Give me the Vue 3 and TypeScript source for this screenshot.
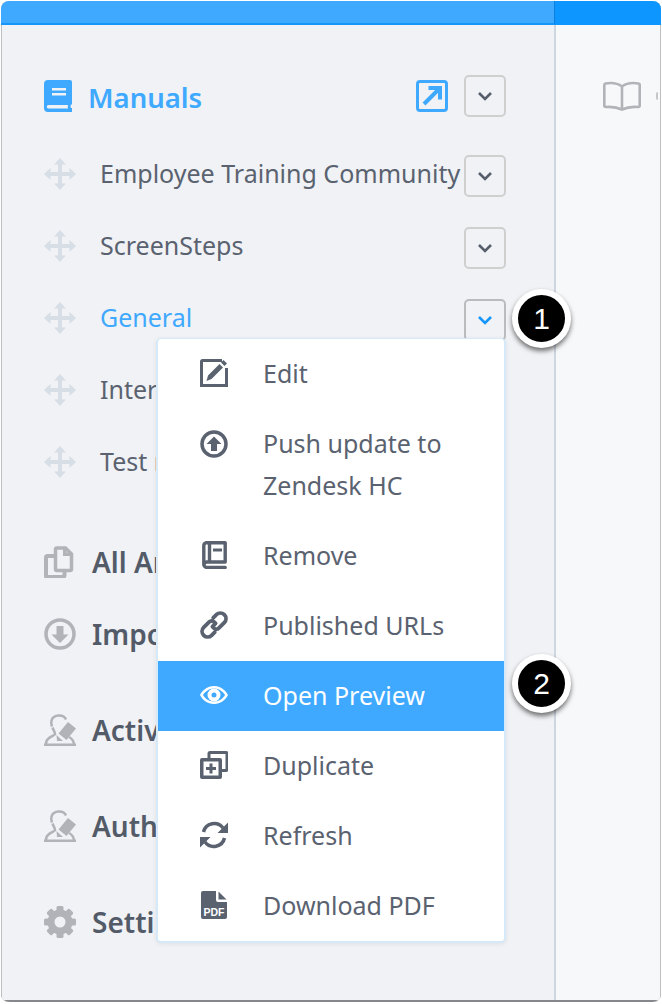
<script setup lang="ts">
const icons: Record<string, string> = {
  edit: '<path d="M22 1.500H2.500a1 1 0 0 0-1 1v24h25V9" fill="none" stroke="currentColor" stroke-width="3"/><path d="M6.500 22l1.500-5.500L19.500 5l3.500 3.500L11.500 20zM21 3.500L23.500 1 27 4.500 24.500 7z" fill="currentColor"/>',
  push: '<circle cx="14" cy="14" r="12" fill="none" stroke="currentColor" stroke-width="3.500"/><path d="M14 6.500l7.500 7.500h-4.500v7h-6v-7H6.500z" fill="currentColor"/>',
  remove: '<path d="M6 1.800h19.200V21H7a3 3 0 0 0-3 2.700 2.700 2.700 0 0 0 2.700 2.700h18.500M3.800 24V4.500A2.800 2.800 0 0 1 6 1.800M9.500 2v18" fill="none" stroke="currentColor" stroke-width="3.400" stroke-linecap="round" stroke-linejoin="round"/><path d="M13 7.500h9v3h-9z" fill="currentColor"/>',
  link: '<path d="M16 14v-2a3 3 0 0 0-3-3H6a5 5 0 0 0 0 10h4M12 14v2a3 3 0 0 0 3 3h7a5 5 0 0 0 0-10h-4M12 14h4" fill="none" stroke="currentColor" stroke-width="3.400" stroke-linecap="round" transform="rotate(-45 14 14) translate(14 14) scale(1.12) translate(-14 -14)"/>',
  eye: '<path fill-rule="evenodd" d="M14 3.500C22 3.500 26.500 9.500 28 12.500c-1.500 3-6 9-14 9S1.500 15.500 0 12.500c1.500-3 6-9 14-9zM14 6C8.500 6 4.800 9.500 3 12.500 4.800 15.500 8.500 19 14 19s9.200-3.500 11-6.500C23.200 9.500 19.500 6 14 6z" fill="currentColor" transform="translate(0 1.500)"/><path fill-rule="evenodd" d="M14 7.500a6.500 6.500 0 1 1 0 13 6.500 6.500 0 0 1 0-13zM14 11.500a2.500 2.500 0 1 0 0 5 2.500 2.500 0 0 0 0-5z" fill="currentColor"/>',
  duplicate: '<path d="M9 7V2.500a1 1 0 0 1 1-1h16a1 1 0 0 1 1 1v16a1 1 0 0 1-1 1h-4" fill="none" stroke="currentColor" stroke-width="3"/><path fill-rule="evenodd" d="M2 7h18a2 2 0 0 1 2 2v17a2 2 0 0 1-2 2H2a2 2 0 0 1-2-2V9a2 2 0 0 1 2-2zM3.500 10.500v14h15v-14zM9.500 12.500h3v3.500H16v3h-3.500v3.500h-3V19H6v-3h3.500z" fill="currentColor"/>',
  refresh: '<path d="M3.500 11A11 11 0 0 1 23 7M24.500 17A11 11 0 0 1 5 21" fill="none" stroke="currentColor" stroke-width="3.500"/><path d="M28 1.500V12H17.500zM0 26.500V16h10.500z" fill="currentColor"/>',
  pdf: '<path d="M3 0h13v9a2 2 0 0 0 2 2h9v15a2 2 0 0 1-2 2H3a2 2 0 0 1-2-2V2a2 2 0 0 1 2-2zM18.500 0.500L26.500 8.500H18.500z" fill="currentColor"/><text x="14" y="24.500" text-anchor="middle" font-family="Liberation Sans, sans-serif" font-weight="700" font-size="10.500" fill="#fff">PDF</text>',
  copy: '<path d="M13 2h8.500l6 6v15a1.500 1.500 0 0 1-1.500 1.500H13A1.500 1.500 0 0 1 11.500 23V3.500A1.500 1.500 0 0 1 13 2z" fill="none" stroke="currentColor" stroke-width="3.500"/><path d="M10 10H3.500A1.500 1.500 0 0 0 2 11.500V30a1 1 0 0 0 1 1h16a1.500 1.500 0 0 0 1.500-1.500V26" fill="none" stroke="currentColor" stroke-width="4"/><path d="M19 1h3.500v5.500H28V10h-9z" fill="currentColor"/>',
  import: '<circle cx="16" cy="16" r="14" fill="none" stroke="currentColor" stroke-width="3.500"/><path d="M16 25l-8.500-8.500h5V8h7v8.500h5z" fill="currentColor"/>',
  person: '<path d="M8 12.500C6.500 8 7 2 14.500 1.500c4-.2 6.500 1.500 7.500 4M8.500 13.500C9.500 16.500 11 18 11 20c0 1-4 2.500-6.500 4.500C2.500 26 2 28.500 2 30M25 23c3 1.500 4.500 3.500 5 7" fill="none" stroke="currentColor" stroke-width="2.500"/><path d="M24 8l8 6.500-9.500 11.500-8-6.500z" fill="currentColor"/><path d="M12.500 21l.5 6h6z" fill="currentColor"/><path d="M0 29.500h32V32H0z" fill="currentColor"/>',
  move: '<path d="M16 0l6 6.500h-4V14h7.500v-4l6.500 6-6.500 6v-4H18v7.500h4L16 32l-6-6.500h4V18H6.500v4L0 16l6.500-6v4H14V6.500h-4z" fill="currentColor"/>'
}

const listRows = [
  { label: 'Employee Training Community', active: false },
  { label: 'ScreenSteps', active: false },
  { label: 'General', active: true },
  { label: 'Internal', active: false },
  { label: 'Test manual', active: false }
]

const sections = [
  { label: 'All Articles', icon: 'copy', cls: 'first' },
  { label: 'Import', icon: 'import', cls: '' },
  { label: 'Activity', icon: 'person', cls: 'wide' },
  { label: 'Authors', icon: 'person', cls: 'wide' }
]

const menuItems = [
  { label: 'Edit', icon: 'edit' },
  { label: 'Push update to Zendesk HC', icon: 'push', tall: true },
  { label: 'Remove', icon: 'remove' },
  { label: 'Published URLs', icon: 'link' },
  { label: 'Open Preview', icon: 'eye', selected: true },
  { label: 'Duplicate', icon: 'duplicate' },
  { label: 'Refresh', icon: 'refresh' },
  { label: 'Download PDF', icon: 'pdf' }
]

const gearTeeth = [0, 45, 90, 135, 180, 225, 270, 315]
</script>

<template>
  <div class="page">
    <div class="window">
      <div class="topbar">
        <div class="topbar-left"></div>
        <div class="topbar-right"></div>
      </div>
      <div class="body">
        <aside class="sidebar">
          <div class="row head">
            <svg class="book" viewBox="0 0 28 32">
              <path fill-rule="evenodd" d="M4 0h22a2 2 0 0 1 2 2v22.500h-1c-.6 1-.6 2.500 0 3.500h1v4H4a4 4 0 0 1-4-4V4a4 4 0 0 1 4-4zM8 8v2.500h14V8zM8 13v2.500h14V13zM4.500 25a1.500 1.500 0 0 0 0 3.500H24c-.3-1.200-.3-2.300 0-3.500z" fill="currentColor"/>
            </svg>
            <span class="head-label">Manuals</span>
            <svg class="external" viewBox="0 0 32 32">
              <rect x="1.500" y="1.500" width="29" height="29" rx="2.500" fill="none" stroke="currentColor" stroke-width="3"/>
              <path d="M8 24L22 10M12.500 8H24v11.500" fill="none" stroke="currentColor" stroke-width="4"/>
            </svg>
            <button class="chevron">
              <svg viewBox="0 0 16 10"><path d="M2 2l6 6 6-6" fill="none" stroke="currentColor" stroke-width="2.600"/></svg>
            </button>
          </div>

          <div class="list">
            <div v-for="row in listRows" :key="row.label" class="row item" :class="{ active: row.active }">
              <svg class="move" viewBox="0 0 32 32" v-html="icons.move"></svg>
              <span class="item-label">{{ row.label }}</span>
              <button class="chevron">
                <svg viewBox="0 0 16 10"><path d="M2 2l6 6 6-6" fill="none" stroke="currentColor" stroke-width="2.600"/></svg>
              </button>
              <div v-if="row.active" class="menu">
                <div v-for="m in menuItems" :key="m.label" class="menu-item" :class="{ selected: m.selected, tall: m.tall }">
                  <svg class="menu-icon" viewBox="0 0 28 28" v-html="icons[m.icon]"></svg>
                  <span class="menu-label">{{ m.label }}</span>
                </div>
              </div>
            </div>
          </div>

          <div class="sections">
            <div v-for="s in sections" :key="s.label" class="section" :class="s.cls">
              <svg class="section-icon" viewBox="0 0 32 32" v-html="icons[s.icon]"></svg>
              <span class="section-label">{{ s.label }}</span>
            </div>
            <div class="section wide">
              <svg class="section-icon" viewBox="0 0 32 32">
                <g fill="currentColor">
                  <rect v-for="a in gearTeeth" :key="a" x="12.500" y="0" width="7" height="8" rx="1.500" :transform="`rotate(${a} 16 16)`" />
                </g>
                <circle cx="16" cy="16" r="9" fill="none" stroke="currentColor" stroke-width="7" />
              </svg>
              <span class="section-label">Settings</span>
            </div>
          </div>

          <div class="callout one">1</div>
          <div class="callout two">2</div>
        </aside>

        <main class="content">
          <svg class="open-book" viewBox="0 0 38 30">
            <path d="M19 5.500C15 2.500 8 1.500 2.500 2.500a1.500 1.500 0 0 0-1.200 1.500v20.500c0 1 .6 1.500 1.500 1.500 6-.5 12 .5 16.200 2.500 4.200-2 10.200-3 16.200-2.500.9 0 1.500-.5 1.500-1.500V4a1.500 1.500 0 0 0-1.200-1.500C30 1.500 23 2.500 19 5.500zM19 5.500V28" fill="none" stroke="currentColor" stroke-width="2.600"/>
          </svg>
          <span class="content-mark"></span>
        </main>
      </div>
    </div>
  </div>
</template>

<style>
html, body {
  margin: 0;
  background: #fff;
}
</style>

<style scoped>
.page {
  width: 662px;
  height: 1004px;
  box-sizing: border-box;
  padding: 1px 1px 2px 1px;
  font-family: "Noto Sans", sans-serif;
  overflow: hidden;
}

.window {
  height: 100%;
  display: flex;
  flex-direction: column;
  border-radius: 8px;
  overflow: hidden;
  box-shadow: inset 1px 0 0 #bdbfc2, inset -1px 0 0 #bdbfc2, inset 0 -2px 0 #85878a;
  position: relative;
}

.topbar {
  height: 24px;
  display: flex;
  flex-shrink: 0;
}

.topbar-left {
  width: 554px;
  background: #3fa9ff;
  border-bottom: 2px solid #1596fd;
  border-right: 1px solid #0d80dd;
  box-sizing: border-box;
}

.topbar-right {
  flex: 1;
  background: #0d96ff;
}

.body {
  flex: 1;
  display: flex;
  min-height: 0;
  padding: 0 1px 2px 1px;
}

.sidebar {
  border-right: 2px solid #cfd6df;
  background: #f0f2f5;
  position: relative;
  padding: 35px 48px 0 42px;
  width: 462px;
}

.row {
  display: flex;
  align-items: center;
  height: 72px;
  position: relative;
}

.head {
  color: #3fa9ff;
}

.book {
  width: 28px;
  height: 32px;
  margin-right: 17px;
}

.head-label {
  flex: 1;
  font-size: 27.500px;
  font-weight: 600;
  line-height: 32px;
  margin-top: 3px;
  margin-left: -1px;
}

.external {
  width: 32px;
  height: 32px;
  margin-right: 16px;
}

.chevron {
  width: 42px;
  height: 42px;
  box-sizing: border-box;
  border: 2px solid #cfcfcf;
  border-radius: 5px;
  background: transparent;
  color: #565d6b;
  padding: 0;
  display: flex;
  align-items: center;
  justify-content: center;
  flex-shrink: 0;
}

.chevron svg {
  width: 16px;
  height: 10px;
}

.list {
  margin-top: 8px;
  margin-bottom: 26px;
}

.item {
  color: #5a6270;
}

.move {
  width: 32px;
  height: 32px;
  color: #d7dee6;
  margin-right: 24px;
  margin-top: -4px;
  flex-shrink: 0;
}

.item-label {
  flex: 1;
  font-size: 25px;
  line-height: 32px;
  white-space: nowrap;
  margin-top: -6px;
}

.item.active .item-label {
  color: #3fa9ff;
}

.item.active .chevron {
  border-color: #b9bbbd;
  color: #1596fd;
}

.menu {
  position: absolute;
  left: 112px;
  top: 54px;
  width: 346px;
  z-index: 2;
  background: #fff;
  border: 2px solid #d5e9f9;
  border-top-width: 1px;
  border-radius: 5px;
  box-shadow: 0 1px 4px rgba(60, 70, 90, 0.1);
}

.menu-item {
  height: 70px;
  display: flex;
  align-items: center;
  padding-left: 42px;
  color: #5a6270;
}

.menu-item.tall {
  height: 112px;
  align-items: flex-start;
}

.menu-item.selected {
  background: #3fa9ff;
  color: #fff;
}

.menu-icon {
  width: 28px;
  height: 28px;
  margin-right: 36px;
  margin-top: -2px;
  flex-shrink: 0;
}

.menu-item.tall .menu-icon {
  margin-top: 21px;
}

.menu-label {
  font-size: 25px;
  line-height: 42px;
  max-width: 220px;
  margin-top: -2px;
  margin-left: -1px;
}

.menu-item.tall .menu-label {
  margin-top: 13px;
}

.sections {
  color: #535b69;
}

.section {
  display: flex;
  align-items: center;
  height: 72px;
  margin-top: 0;
}

.section.wide {
  margin-top: 24px;
}

.section-icon {
  width: 32px;
  height: 32px;
  color: #b1b3b8;
  margin-right: 16px;
  flex-shrink: 0;
}

.section-label {
  font-size: 28px;
  font-weight: 600;
  white-space: nowrap;
}

.callout {
  position: absolute;
  left: 510px;
  width: 47px;
  height: 47px;
  border: 6px solid #fff;
  border-radius: 50%;
  background: #000;
  color: #fff;
  font-family: "Liberation Sans", sans-serif;
  font-size: 30px;
  line-height: 47px;
  text-align: center;
  box-shadow: 0 3px 5px rgba(0, 0, 0, 0.55);
  z-index: 3;
}

.callout.one {
  top: 264px;
}

.callout.two {
  top: 629px;
}

.content {
  flex: 1;
  background: #f7f8fa;
  display: flex;
  align-items: flex-start;
  padding: 56px 0 0 47px;
  gap: 15px;
  overflow: hidden;
  color: #b1b3b8;
}

.open-book {
  width: 38px;
  height: 30px;
  flex-shrink: 0;
}

.content-mark {
  width: 2px;
  height: 8px;
  margin-top: 11px;
  border-radius: 2px 0 0 2px;
  background: #c4c6ca;
}
</style>
